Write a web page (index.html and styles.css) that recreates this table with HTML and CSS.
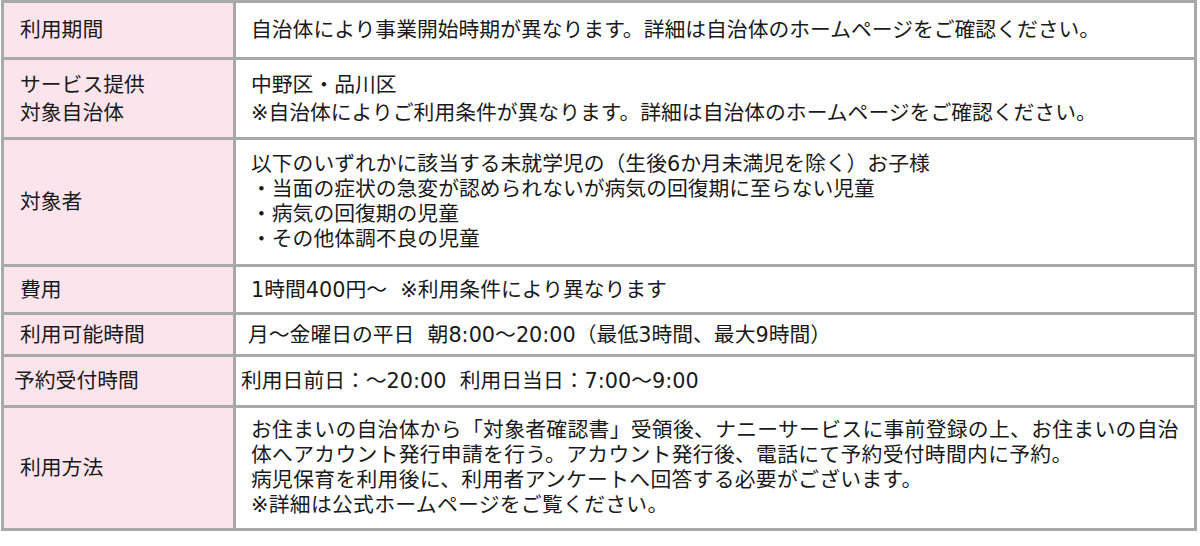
FILE: index.html
```html
<!DOCTYPE html>
<html lang="ja">
<head>
<meta charset="utf-8">
<link rel="stylesheet" href="styles.css">
</head>
<body>
<table class="info">
  <tr class="r1">
    <th>利用期間</th>
    <td>自治体により事業開始時期が異なります。詳細は自治体のホームページをご確認ください。</td>
  </tr>
  <tr class="r2">
    <th>サービス提供<br>対象自治体</th>
    <td>中野区・品川区<br>※自治体によりご利用条件が異なります。詳細は自治体のホームページをご確認ください。</td>
  </tr>
  <tr class="r3">
    <th>対象者</th>
    <td class="tight">以下のいずれかに該当する未就学児の（生後6か月未満児を除く）お子様<br>・当面の症状の急変が認められないが病気の回復期に至らない児童<br>・病気の回復期の児童<br>・その他体調不良の児童</td>
  </tr>
  <tr class="r4">
    <th>費用</th>
    <td>1時間400円～ &nbsp;※利用条件により異なります</td>
  </tr>
  <tr class="r5">
    <th>利用可能時間</th>
    <td class="shift-l">月～金曜日の平日 &nbsp;朝8:00～20:00（最低3時間、最大9時間）</td>
  </tr>
  <tr class="r6">
    <th class="shift-l">予約受付時間</th>
    <td class="shift-ll">利用日前日：～20:00 &nbsp;利用日当日：7:00～9:00</td>
  </tr>
  <tr class="r7">
    <th>利用方法</th>
    <td class="tight wide">お住まいの自治体から「対象者確認書」受領後、ナニーサービスに事前登録の上、お住まいの自治<br>体へアカウント発行申請を行う。アカウント発行後、電話にて予約受付時間内に予約。<br>病児保育を利用後に、利用者アンケートへ回答する必要がございます。<br>※詳細は公式ホームページをご覧ください。</td>
  </tr>
</table>
</body>
</html>
```

FILE: styles.css
```css
html, body {
  margin: 0;
  padding: 0;
  background: #ffffff;
}
body {
  padding: 0 0 0 1px;
  font-family: "DejaVu Sans", "Noto Sans CJK JP", sans-serif;
  color: #1a1a1a;
}
.info {
  border-collapse: collapse;
  width: 1196px;
  font-size: 20.8px;
  line-height: 28px;
}
.info th,
.info td {
  border: 3px solid #a9a9a9;
  vertical-align: middle;
  text-align: left;
  font-weight: normal;
  padding: 0;
  white-space: nowrap;
}
.info th {
  width: 213px;
  padding-left: 16px;
  background: #fce4ec;
}
.info td {
  padding-left: 15px;
  padding-right: 0;
  background: #ffffff;
}
.info td.tight {
  line-height: 25px;
}
.info td.wide {
  letter-spacing: 0.3px;
}
.info th.shift-l {
  padding-left: 10px;
}
.info td.shift-l {
  padding-left: 12px;
}
.info td.shift-ll {
  padding-left: 5px;
}
.r1 { height: 57px; }
.r2 { height: 80px; }
.r3 { height: 127px; }
.r4 { height: 48px; }
.r5 { height: 42px; }
.r6 { height: 51px; }
.r7 { height: 123px; }
```
